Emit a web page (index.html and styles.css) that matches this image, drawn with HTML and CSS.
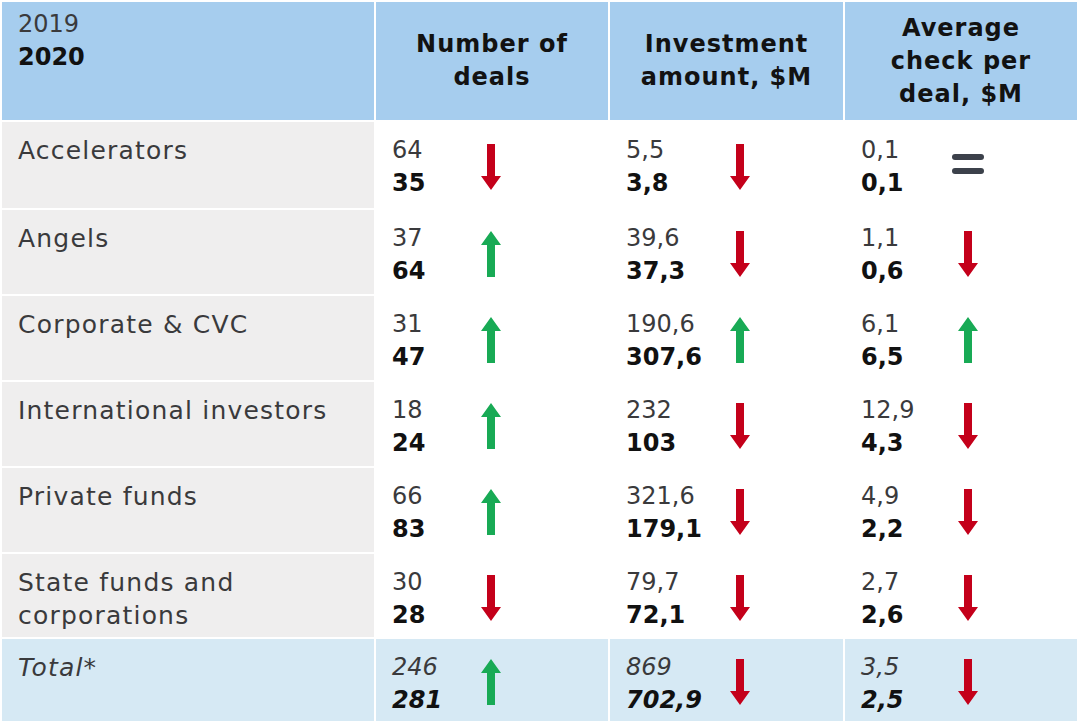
FILE: index.html
```html
<!DOCTYPE html>
<html lang="en">
<head>
<meta charset="utf-8">
<title>Investors 2019 vs 2020</title>
<link rel="stylesheet" href="styles.css">
</head>
<body>
<div class="table">
  <div class="hcell hfirst"><span class="reg">2019</span><span class="bold">2020</span></div>
  <div class="hcell">Number of<br>deals</div>
  <div class="hcell">Investment<br>amount, $M</div>
  <div class="hcell">Average<br>check per<br>deal, $M</div>

  <div class="label">Accelerators</div>
  <div class="cell c2"><div class="nums"><span class="reg">64</span><span class="bold">35</span></div><svg class="arrow down" viewBox="0 0 20 46"><path d="M6 0H14V32H20L10 46L0 32H6Z"/></svg></div>
  <div class="cell c3"><div class="nums"><span class="reg">5,5</span><span class="bold">3,8</span></div><svg class="arrow down" viewBox="0 0 20 46"><path d="M6 0H14V32H20L10 46L0 32H6Z"/></svg></div>
  <div class="cell c4"><div class="nums"><span class="reg">0,1</span><span class="bold">0,1</span></div><svg class="equal" viewBox="0 0 34 24"><rect x="1" y="2" width="32" height="6" rx="3"/><rect x="1" y="16" width="32" height="6" rx="3"/></svg></div>

  <div class="label">Angels</div>
  <div class="cell c2"><div class="nums"><span class="reg">37</span><span class="bold">64</span></div><svg class="arrow up" viewBox="0 0 20 46"><path d="M6 46H14V14H20L10 0L0 14H6Z"/></svg></div>
  <div class="cell c3"><div class="nums"><span class="reg">39,6</span><span class="bold">37,3</span></div><svg class="arrow down" viewBox="0 0 20 46"><path d="M6 0H14V32H20L10 46L0 32H6Z"/></svg></div>
  <div class="cell c4"><div class="nums"><span class="reg">1,1</span><span class="bold">0,6</span></div><svg class="arrow down" viewBox="0 0 20 46"><path d="M6 0H14V32H20L10 46L0 32H6Z"/></svg></div>

  <div class="label">Corporate &amp; CVC</div>
  <div class="cell c2"><div class="nums"><span class="reg">31</span><span class="bold">47</span></div><svg class="arrow up" viewBox="0 0 20 46"><path d="M6 46H14V14H20L10 0L0 14H6Z"/></svg></div>
  <div class="cell c3"><div class="nums"><span class="reg">190,6</span><span class="bold">307,6</span></div><svg class="arrow up" viewBox="0 0 20 46"><path d="M6 46H14V14H20L10 0L0 14H6Z"/></svg></div>
  <div class="cell c4"><div class="nums"><span class="reg">6,1</span><span class="bold">6,5</span></div><svg class="arrow up" viewBox="0 0 20 46"><path d="M6 46H14V14H20L10 0L0 14H6Z"/></svg></div>

  <div class="label">International investors</div>
  <div class="cell c2"><div class="nums"><span class="reg">18</span><span class="bold">24</span></div><svg class="arrow up" viewBox="0 0 20 46"><path d="M6 46H14V14H20L10 0L0 14H6Z"/></svg></div>
  <div class="cell c3"><div class="nums"><span class="reg">232</span><span class="bold">103</span></div><svg class="arrow down" viewBox="0 0 20 46"><path d="M6 0H14V32H20L10 46L0 32H6Z"/></svg></div>
  <div class="cell c4"><div class="nums"><span class="reg">12,9</span><span class="bold">4,3</span></div><svg class="arrow down" viewBox="0 0 20 46"><path d="M6 0H14V32H20L10 46L0 32H6Z"/></svg></div>

  <div class="label">Private funds</div>
  <div class="cell c2"><div class="nums"><span class="reg">66</span><span class="bold">83</span></div><svg class="arrow up" viewBox="0 0 20 46"><path d="M6 46H14V14H20L10 0L0 14H6Z"/></svg></div>
  <div class="cell c3"><div class="nums"><span class="reg">321,6</span><span class="bold">179,1</span></div><svg class="arrow down" viewBox="0 0 20 46"><path d="M6 0H14V32H20L10 46L0 32H6Z"/></svg></div>
  <div class="cell c4"><div class="nums"><span class="reg">4,9</span><span class="bold">2,2</span></div><svg class="arrow down" viewBox="0 0 20 46"><path d="M6 0H14V32H20L10 46L0 32H6Z"/></svg></div>

  <div class="label">State funds and<br>corporations</div>
  <div class="cell c2"><div class="nums"><span class="reg">30</span><span class="bold">28</span></div><svg class="arrow down" viewBox="0 0 20 46"><path d="M6 0H14V32H20L10 46L0 32H6Z"/></svg></div>
  <div class="cell c3"><div class="nums"><span class="reg">79,7</span><span class="bold">72,1</span></div><svg class="arrow down" viewBox="0 0 20 46"><path d="M6 0H14V32H20L10 46L0 32H6Z"/></svg></div>
  <div class="cell c4"><div class="nums"><span class="reg">2,7</span><span class="bold">2,6</span></div><svg class="arrow down" viewBox="0 0 20 46"><path d="M6 0H14V32H20L10 46L0 32H6Z"/></svg></div>

  <div class="label total">Total*</div>
  <div class="cell c2 total"><div class="nums"><span class="reg">246</span><span class="bold">281</span></div><svg class="arrow up" viewBox="0 0 20 46"><path d="M6 46H14V14H20L10 0L0 14H6Z"/></svg></div>
  <div class="cell c3 total"><div class="nums"><span class="reg">869</span><span class="bold">702,9</span></div><svg class="arrow down" viewBox="0 0 20 46"><path d="M6 0H14V32H20L10 46L0 32H6Z"/></svg></div>
  <div class="cell c4 total"><div class="nums"><span class="reg">3,5</span><span class="bold">2,5</span></div><svg class="arrow down" viewBox="0 0 20 46"><path d="M6 0H14V32H20L10 46L0 32H6Z"/></svg></div>
</div>
</body>
</html>
```

FILE: styles.css
```css
html, body {
  margin: 0;
  padding: 0;
  background: #ffffff;
}

body {
  font-family: "DejaVu Sans", "Noto Sans", sans-serif;
  font-size: 24px;
  line-height: 33px;
  color: #3a3a3c;
}

.table {
  display: grid;
  grid-template-columns: 372px 232px 233px 232px;
  grid-template-rows: 118px 86px 84px 84px 84px 84px 83px 82px;
  gap: 2px;
  margin: 2px 0 0 2px;
  width: 1075px;
}

.hcell {
  background: #a6cdee;
  font-weight: bold;
  font-size: 24px;
  letter-spacing: 1px;
  color: #121212;
  text-align: center;
  display: flex;
  align-items: center;
  justify-content: center;
}

.hfirst {
  flex-direction: column;
  align-items: flex-start;
  justify-content: flex-start;
  text-align: left;
  padding: 6px 0 0 16px;
  letter-spacing: 0;
}

.hfirst .reg {
  font-weight: normal;
  color: #3a3a3c;
}

.label {
  background: #efeeee;
  padding: 12px 0 0 16px;
  color: #3a3a3c;
  font-size: 25px;
  letter-spacing: 1.2px;
}

.cell {
  background: #ffffff;
  display: flex;
  align-items: center;
  padding: 0 0 0 16px;
}

.total {
  background: #d6e9f4;
  font-style: italic;
}

.label.total {
  background: #d6e9f4;
}

.nums {
  display: flex;
  flex-direction: column;
  align-self: flex-start;
  padding-top: 12px;
}

.c2 .nums { width: 89px; }
.c3 .nums { width: 104px; }
.c4 .nums { width: 97px; }

.reg {
  color: #3a3a3c;
}

.bold {
  font-weight: bold;
  color: #111111;
}

.arrow {
  width: 20px;
  height: 46px;
  margin-top: 4px;
}

.arrow.down path { fill: #c4001a; }
.arrow.up path { fill: #18aa55; }

.equal {
  width: 34px;
  height: 24px;
  margin-left: -7px;
  margin-top: -2px;
}

.equal rect { fill: #3c414b; }
```
